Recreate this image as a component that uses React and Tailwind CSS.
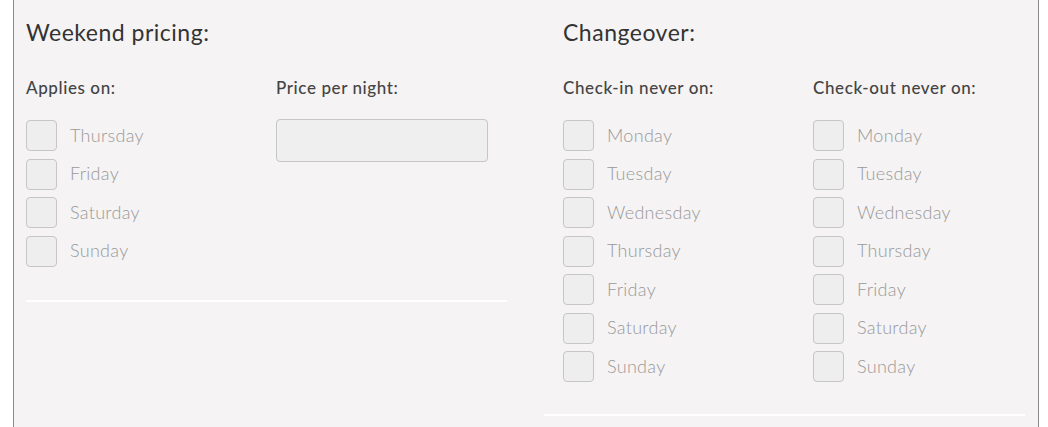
import React from 'react';

const Day = ({ label }) => (
  <label className="flex items-center h-[31px]">
    <span className="w-[31px] h-[31px] shrink-0 rounded-[4px] border border-[#c6c6c6] bg-[#eeeeee]" />
    <span className="ml-[13px] -mt-[1px] text-[18px] font-light tracking-[0.3px] text-[#999999]">{label}</span>
  </label>
);

const DayList = ({ days }) => (
  <div className="flex flex-col gap-[7.5px]">
    {days.map((d) => (
      <Day key={d} label={d} />
    ))}
  </div>
);

const week = ['Monday', 'Tuesday', 'Wednesday', 'Thursday', 'Friday', 'Saturday', 'Sunday'];

export default function App() {
  return (
    <div className="bg-white h-[427px] pl-[13px] pr-[9px] font-['Lato',sans-serif] overflow-hidden">
      <div className="h-full flex border-l border-r border-[#8a8a8a] bg-[#f5f3f4] pl-[12px] pr-[12px]">
        {/* Weekend pricing */}
        <div className="w-[481px] shrink-0">
          <h2 className="pt-[17px] text-[23px] leading-[30px] tracking-[0.5px] text-[#333333]">Weekend pricing:</h2>
          <div className="flex mt-[31px]">
            <div className="w-[250px]">
              <h3 className="text-[17px] leading-[20px] font-medium tracking-[0.6px] text-[#444444]">Applies on:</h3>
              <div className="mt-[22px]">
                <DayList days={['Thursday', 'Friday', 'Saturday', 'Sunday']} />
              </div>
            </div>
            <div>
              <h3 className="text-[17px] leading-[20px] font-medium tracking-[0.6px] text-[#444444]">Price per night:</h3>
              <input
                type="text"
                className="mt-[21px] block w-[212px] h-[43px] rounded-[4px] border border-[#c6c6c6] bg-[#efefef] outline-none"
              />
            </div>
          </div>
          <div className="mt-[33px] h-[2px] bg-white" />
        </div>

        {/* Changeover */}
        <div className="w-[481px] shrink-0 ml-[37px]">
          <div className="pl-[19px]">
            <h2 className="pt-[17px] text-[23px] leading-[30px] tracking-[0.5px] text-[#333333]">Changeover:</h2>
            <div className="flex mt-[31px]">
              <div className="w-[250px]">
                <h3 className="text-[17px] leading-[20px] font-medium tracking-[0.6px] text-[#444444]">Check-in never on:</h3>
                <div className="mt-[22px]">
                  <DayList days={week} />
                </div>
              </div>
              <div>
                <h3 className="text-[17px] leading-[20px] font-medium tracking-[0.6px] text-[#444444]">Check-out never on:</h3>
                <div className="mt-[22px]">
                  <DayList days={week} />
                </div>
              </div>
            </div>
          </div>
          <div className="mt-[32px] h-[2px] bg-white" />
        </div>
      </div>
    </div>
  );
}
